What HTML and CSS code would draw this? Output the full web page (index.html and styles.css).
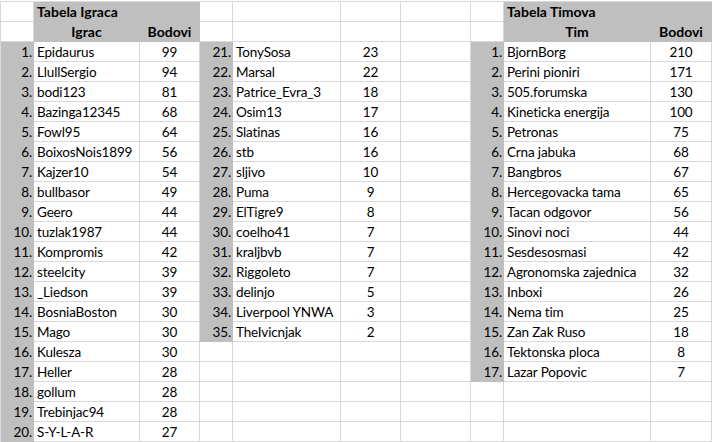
FILE: index.html
```html
<!DOCTYPE html>
<html lang="bs">
<head>
<meta charset="utf-8">
<title>Tabela</title>
<link rel="stylesheet" href="styles.css">
</head>
<body>
<div class="sheet">
  <div class="c"></div><div class="c g h">Tabela Igraca</div><div class="c g"></div><div class="c"></div><div class="c"></div><div class="c"></div><div class="c"></div><div class="c"></div><div class="c g h">Tabela Timova</div><div class="c g"></div>
  <div class="c"></div><div class="c g h m">Igrac</div><div class="c g h m">Bodovi</div><div class="c"></div><div class="c"></div><div class="c"></div><div class="c"></div><div class="c"></div><div class="c g h m">Tim</div><div class="c g h m">Bodovi</div>

  <div class="c g n">1.</div><div class="c">Epidaurus</div><div class="c m">99</div><div class="c g n">21.</div><div class="c">TonySosa</div><div class="c m">23</div><div class="c"></div><div class="c g n">1.</div><div class="c">BjornBorg</div><div class="c m">210</div>
  <div class="c g n">2.</div><div class="c">LlullSergio</div><div class="c m">94</div><div class="c g n">22.</div><div class="c">Marsal</div><div class="c m">22</div><div class="c"></div><div class="c g n">2.</div><div class="c">Perini pioniri</div><div class="c m">171</div>
  <div class="c g n">3.</div><div class="c">bodi123</div><div class="c m">81</div><div class="c g n">23.</div><div class="c">Patrice_Evra_3</div><div class="c m">18</div><div class="c"></div><div class="c g n">3.</div><div class="c">505.forumska</div><div class="c m">130</div>
  <div class="c g n">4.</div><div class="c">Bazinga12345</div><div class="c m">68</div><div class="c g n">24.</div><div class="c">Osim13</div><div class="c m">17</div><div class="c"></div><div class="c g n">4.</div><div class="c">Kineticka energija</div><div class="c m">100</div>
  <div class="c g n">5.</div><div class="c">Fowl95</div><div class="c m">64</div><div class="c g n">25.</div><div class="c">Slatinas</div><div class="c m">16</div><div class="c"></div><div class="c g n">5.</div><div class="c">Petronas</div><div class="c m">75</div>
  <div class="c g n">6.</div><div class="c">BoixosNois1899</div><div class="c m">56</div><div class="c g n">26.</div><div class="c">stb</div><div class="c m">16</div><div class="c"></div><div class="c g n">6.</div><div class="c">Crna jabuka</div><div class="c m">68</div>
  <div class="c g n">7.</div><div class="c">Kajzer10</div><div class="c m">54</div><div class="c g n">27.</div><div class="c">sljivo</div><div class="c m">10</div><div class="c"></div><div class="c g n">7.</div><div class="c">Bangbros</div><div class="c m">67</div>
  <div class="c g n">8.</div><div class="c">bullbasor</div><div class="c m">49</div><div class="c g n">28.</div><div class="c">Puma</div><div class="c m">9</div><div class="c"></div><div class="c g n">8.</div><div class="c">Hercegovacka tama</div><div class="c m">65</div>
  <div class="c g n">9.</div><div class="c">Geero</div><div class="c m">44</div><div class="c g n">29.</div><div class="c">ElTigre9</div><div class="c m">8</div><div class="c"></div><div class="c g n">9.</div><div class="c">Tacan odgovor</div><div class="c m">56</div>
  <div class="c g n">10.</div><div class="c">tuzlak1987</div><div class="c m">44</div><div class="c g n">30.</div><div class="c">coelho41</div><div class="c m">7</div><div class="c"></div><div class="c g n">10.</div><div class="c">Sinovi noci</div><div class="c m">44</div>
  <div class="c g n">11.</div><div class="c">Kompromis</div><div class="c m">42</div><div class="c g n">31.</div><div class="c">kraljbvb</div><div class="c m">7</div><div class="c"></div><div class="c g n">11.</div><div class="c">Sesdesosmasi</div><div class="c m">42</div>
  <div class="c g n">12.</div><div class="c">steelcity</div><div class="c m">39</div><div class="c g n">32.</div><div class="c">Riggoleto</div><div class="c m">7</div><div class="c"></div><div class="c g n">12.</div><div class="c">Agronomska zajednica</div><div class="c m">32</div>
  <div class="c g n">13.</div><div class="c">_Liedson</div><div class="c m">39</div><div class="c g n">33.</div><div class="c">delinjo</div><div class="c m">5</div><div class="c"></div><div class="c g n">13.</div><div class="c">Inboxi</div><div class="c m">26</div>
  <div class="c g n">14.</div><div class="c">BosniaBoston</div><div class="c m">30</div><div class="c g n">34.</div><div class="c">Liverpool YNWA</div><div class="c m">3</div><div class="c"></div><div class="c g n">14.</div><div class="c">Nema tim</div><div class="c m">25</div>
  <div class="c g n">15.</div><div class="c">Mago</div><div class="c m">30</div><div class="c g n">35.</div><div class="c">TheIvicnjak</div><div class="c m">2</div><div class="c"></div><div class="c g n">15.</div><div class="c">Zan Zak Ruso</div><div class="c m">18</div>
  <div class="c g n">16.</div><div class="c">Kulesza</div><div class="c m">30</div><div class="c"></div><div class="c"></div><div class="c"></div><div class="c"></div><div class="c g n">16.</div><div class="c">Tektonska ploca</div><div class="c m">8</div>
  <div class="c g n">17.</div><div class="c">Heller</div><div class="c m">28</div><div class="c"></div><div class="c"></div><div class="c"></div><div class="c"></div><div class="c g n">17.</div><div class="c">Lazar Popovic</div><div class="c m">7</div>
  <div class="c g n">18.</div><div class="c">gollum</div><div class="c m">28</div><div class="c"></div><div class="c"></div><div class="c"></div><div class="c"></div><div class="c"></div><div class="c"></div><div class="c"></div>
  <div class="c g n">19.</div><div class="c">Trebinjac94</div><div class="c m">28</div><div class="c"></div><div class="c"></div><div class="c"></div><div class="c"></div><div class="c"></div><div class="c"></div><div class="c"></div>
  <div class="c g n">20.</div><div class="c">S-Y-L-A-R</div><div class="c m">27</div><div class="c"></div><div class="c"></div><div class="c"></div><div class="c"></div><div class="c"></div><div class="c"></div><div class="c"></div>
</div>
</body>
</html>
```

FILE: styles.css
```css
html, body {
  margin: 0;
  padding: 0;
  background: #ffffff;
}

body {
  padding-top: 1px;
  font-family: Lato, "Open Sans", sans-serif;
  font-size: 13.5px;
  letter-spacing: -0.15px;
  color: #000000;
}

.sheet {
  display: grid;
  grid-template-columns: 33px 106px 60px 33px 108px 60px 70px 33px 147px 61px;
  grid-auto-rows: 20px;
  border-top: 1px solid #d9d9d9;
  border-left: 1px solid #d9d9d9;
  width: max-content;
}

.c {
  box-sizing: border-box;
  border-right: 1px solid #d9d9d9;
  border-bottom: 1px solid #d9d9d9;
  display: flex;
  align-items: flex-end;
  line-height: 18px;
  padding: 0 3px;
  white-space: nowrap;
  overflow: visible;
}

.g {
  background: #bfbfbf;
  border-color: #bfbfbf;
}

.h {
  font-weight: bold;
  font-size: 14px;
  letter-spacing: 0;
}

.n {
  justify-content: flex-end;
  padding: 0 1px 0 0;
}

.m {
  justify-content: center;
  padding: 0;
}
```
